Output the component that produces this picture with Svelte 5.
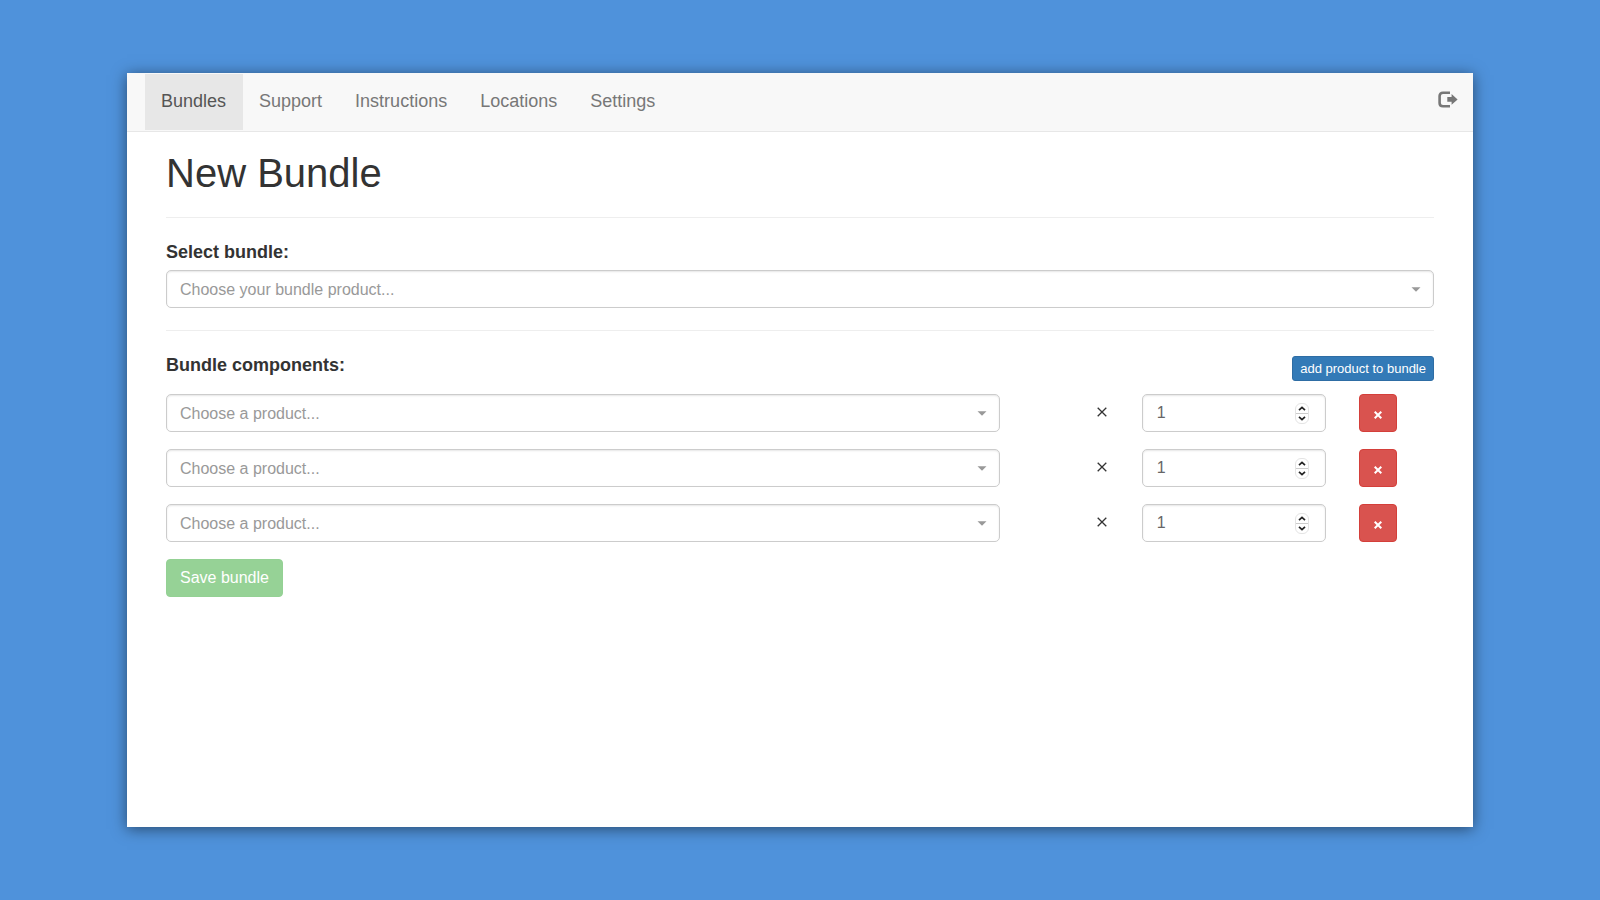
<script lang="ts">
  type Component = { id: number; product: string; quantity: number };

  const links = ['Bundles', 'Support', 'Instructions', 'Locations', 'Settings'];

  let active = $state('Bundles');
  let bundle = $state('');
  let nextId = 4;
  let components = $state<Component[]>([
    { id: 1, product: '', quantity: 1 },
    { id: 2, product: '', quantity: 1 },
    { id: 3, product: '', quantity: 1 },
  ]);

  function addComponent() {
    components.push({ id: nextId++, product: '', quantity: 1 });
  }

  function removeComponent(id: number) {
    components = components.filter((c) => c.id !== id);
  }

  function step(component: Component, by: number) {
    component.quantity = Math.max(1, component.quantity + by);
  }
</script>

{#snippet caret()}
  <svg class="caret" width="10" height="5" viewBox="0 0 10 5" aria-hidden="true">
    <path d="M0.5 0.2H9.5L5 4.8Z" fill="#999" />
  </svg>
{/snippet}

<div class="page">
  <div class="window">
    <nav class="navbar">
      <ul class="nav-links">
        {#each links as link}
          <li>
            <a
              class="nav-link"
              class:nav-link--active={active === link}
              href="#{link.toLowerCase()}"
              onclick={() => (active = link)}
            >{link}</a>
          </li>
        {/each}
      </ul>
      <a class="logout" href="#logout" aria-label="Log out">
        <svg width="20" height="17" viewBox="0 0 20 17" aria-hidden="true">
          <path d="M12 1.8H5Q1.6 1.8 1.6 5V12Q1.6 15.2 5 15.2H12" fill="none" stroke="#777" stroke-width="2.6" />
          <path d="M9.3 6H13.6V3L19.6 8.4L13.6 13.8V10.8H9.3Z" fill="#777" />
        </svg>
      </a>
    </nav>

    <main class="content">
      <h1>New Bundle</h1>
      <hr />

      <label class="section-label" for="bundle">Select bundle:</label>
      <div class="select">
        <select id="bundle" class="control control--select" bind:value={bundle}>
          <option value="">Choose your bundle product...</option>
        </select>
        {@render caret()}
      </div>
      <hr />

      <div class="components-head">
        <h2 class="section-label">Bundle components:</h2>
        <button class="btn btn--add" type="button" onclick={addComponent}>add product to bundle</button>
      </div>

      {#each components as component (component.id)}
        <div class="row">
          <div class="select product">
            <select class="control control--select" aria-label="Product" bind:value={component.product}>
              <option value="">Choose a product...</option>
            </select>
            {@render caret()}
          </div>
          <div class="times">
            <svg width="10" height="10" viewBox="0 0 10 10" aria-hidden="true">
              <path d="M0.7 0.7L9.3 9.3M9.3 0.7L0.7 9.3" stroke="#333" stroke-width="1.3" />
            </svg>
          </div>
          <div class="quantity">
            <input class="control" type="number" min="1" aria-label="Quantity" bind:value={component.quantity} />
            <div class="spinner">
              <button type="button" class="step" aria-label="Increase" onclick={() => step(component, 1)}>
                <svg width="8" height="5" viewBox="0 0 8 5" aria-hidden="true">
                  <path d="M1 4.2L4 1.4L7 4.2" fill="none" stroke="#222" stroke-width="1.7" />
                </svg>
              </button>
              <button type="button" class="step" aria-label="Decrease" onclick={() => step(component, -1)}>
                <svg width="8" height="5" viewBox="0 0 8 5" aria-hidden="true">
                  <path d="M1 0.8L4 3.6L7 0.8" fill="none" stroke="#222" stroke-width="1.7" />
                </svg>
              </button>
            </div>
          </div>
          <button
            class="btn btn--remove"
            type="button"
            aria-label="Remove product"
            onclick={() => removeComponent(component.id)}
          >
            <svg width="8" height="8" viewBox="0 0 8 8" aria-hidden="true">
              <path d="M0.7 0.7L7.3 7.3M7.3 0.7L0.7 7.3" stroke="#fff" stroke-width="2" />
            </svg>
          </button>
        </div>
      {/each}

      <button class="btn btn--save" type="button" disabled={!bundle}>Save bundle</button>
    </main>
  </div>
</div>

<style>
  :global(body) {
    margin: 0;
    background: #4f92db;
  }

  .page {
    display: flex;
    box-sizing: border-box;
    min-height: 100vh;
    padding: 73px 127px;
    font-family: "Liberation Sans", Arial, sans-serif;
    font-size: 16px;
    color: #333;
  }

  .window {
    flex: 1;
    background: #fff;
    box-shadow: 0 2px 14px rgba(0, 0, 0, 0.5);
  }

  .navbar {
    display: flex;
    align-items: flex-start;
    justify-content: space-between;
    padding: 1px 15px 1px 18px;
    background: #f8f8f8;
    border-bottom: 1px solid #e7e7e7;
  }

  .nav-links {
    display: flex;
    margin: 0;
    padding: 0;
    list-style: none;
  }

  .nav-link {
    display: block;
    padding: 15px 17px 17px 16px;
    font-size: 18px;
    line-height: 24px;
    color: #777;
    text-decoration: none;
  }

  .nav-link--active {
    color: #555;
    background: #e7e7e7;
  }

  .logout {
    display: flex;
    padding-top: 17px;
  }

  .content { padding: 0 39px 24px; }

  h1 {
    margin: 0;
    padding: 17px 0 20px;
    font-size: 40px;
    font-weight: 400;
    line-height: 48px;
  }

  hr {
    margin: 0 0 22px;
    border: 0;
    border-top: 1px solid #eee;
  }

  .section-label {
    display: block;
    margin: 0;
    font-size: 18px;
    font-weight: 700;
    line-height: 24px;
  }

  .control {
    box-sizing: border-box;
    width: 100%;
    height: 38px;
    margin: 0;
    padding: 0 14px;
    border: 1px solid #ccc;
    border-radius: 5px;
    background: #fff;
    box-shadow: inset 0 1px 2px rgba(0, 0, 0, 0.1);
    color: #666;
    font-family: inherit;
    font-size: 16px;
    appearance: none;
  }

  .control--select {
    padding: 0 13px;
    color: #999;
  }

  .select, .quantity {
    display: grid;
    align-items: center;
  }

  .select > :global(*), .quantity > :global(*) { grid-area: 1 / 1; }

  .caret {
    justify-self: end;
    margin-right: 13px;
    pointer-events: none;
  }

  .select + hr { margin-top: 22px; }

  .section-label + .select { margin-top: 6px; }

  .components-head {
    display: flex;
    justify-content: space-between;
    margin-bottom: 13px;
  }

  .row {
    display: grid;
    grid-template-columns: repeat(12, 1fr);
    column-gap: 33px;
    margin-bottom: 17px;
  }

  .product { grid-column: span 8; }

  .times {
    display: flex;
    justify-content: flex-end;
    padding: 13px 2px 0 0;
  }

  .quantity { grid-column: span 2; }

  .quantity input { appearance: textfield; }

  .quantity input::-webkit-inner-spin-button { display: none; }

  .spinner {
    display: flex;
    flex-direction: column;
    justify-self: end;
    width: 14px;
    margin-right: 17px;
    border: 1px solid #e4e4e4;
    border-radius: 6px;
    box-sizing: border-box;
  }

  .step {
    display: flex;
    align-items: center;
    justify-content: center;
    height: 9px;
    padding: 0;
    border: 0;
    background: transparent;
  }

  .step + .step { border-top: 1px solid #ccc; height: 10px; }

  .btn {
    box-sizing: border-box;
    margin: 0;
    border: 1px solid;
    border-radius: 4px;
    color: #fff;
    font-family: inherit;
  }

  .btn--add {
    height: 25px;
    margin-top: 3px;
    padding: 0 7px;
    border-color: #2e6da4;
    border-radius: 3px;
    background: #337ab7;
    font-size: 13px;
  }

  .btn--remove {
    display: flex;
    align-items: center;
    justify-content: center;
    width: 38px;
    height: 38px;
    padding: 3px 0 0;
    border-color: #d43f3a;
    background: #d9534f;
  }

  .btn--save {
    display: block;
    height: 38px;
    padding: 0 13px;
    border-color: #94d194;
    background: #96d296;
    font-size: 16px;
  }
</style>
